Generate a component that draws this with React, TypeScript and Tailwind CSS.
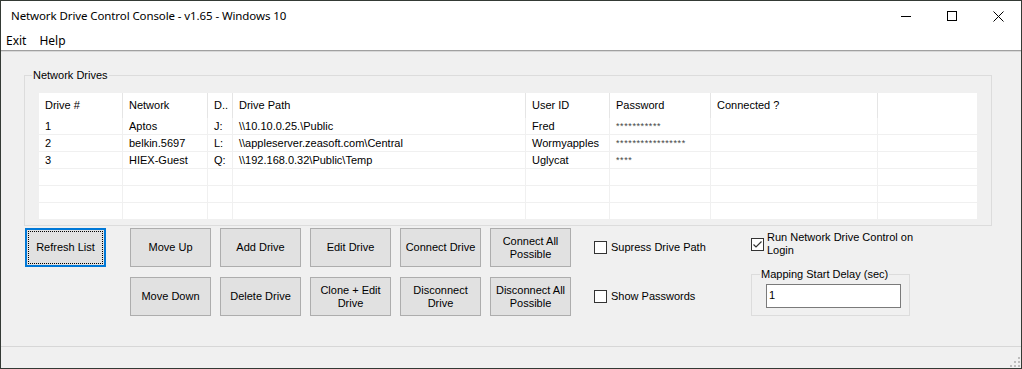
const columns = [
  { label: 'Drive #', width: 84 },
  { label: 'Network', width: 85 },
  { label: 'D..', width: 25 },
  { label: 'Drive Path', width: 293 },
  { label: 'User ID', width: 84 },
  { label: 'Password', width: 101 },
  { label: 'Connected ?', width: 167 },
  { label: '', width: 0 },
]

const drives = [
  ['1', 'Aptos', 'J:', '\\\\10.10.0.25.\\Public', 'Fred', '***********', ''],
  ['2', 'belkin.5697', 'L:', '\\\\appleserver.zeasoft.com\\Central', 'Wormyapples', '*****************', ''],
  ['3', 'HIEX-Guest', 'Q:', '\\\\192.168.0.32\\Public\\Temp', 'Uglycat', '****', ''],
  ['', '', '', '', '', '', ''],
  ['', '', '', '', '', '', ''],
  ['', '', '', '', '', '', ''],
]

const buttons = [
  ['Move Up'],
  ['Add Drive'],
  ['Edit Drive'],
  ['Connect Drive'],
  ['Connect All', 'Possible'],
  ['Move Down'],
  ['Delete Drive'],
  ['Clone + Edit', 'Drive'],
  ['Disconnect', 'Drive'],
  ['Disconnect All', 'Possible'],
]

function CheckBox({ checked = false }: { checked?: boolean }) {
  return (
    <span className="flex h-[13px] w-[13px] shrink-0 items-center justify-center border border-[#333333] bg-white">
      {checked && (
        <svg width="11" height="11" viewBox="0 0 11 11" aria-hidden="true">
          <polyline points="1.5,5.5 4,8 9.5,2.5" fill="none" stroke="#333333" strokeWidth="1.2" />
        </svg>
      )}
    </span>
  )
}

function WinButton({ lines }: { lines: string[] }) {
  return (
    <button
      type="button"
      className="flex h-[39px] w-[81px] flex-col items-center justify-center border border-[#adadad] bg-[#e1e1e1] text-[11px] leading-[13px] text-black"
    >
      {lines.map((l) => (
        <span key={l}>{l}</span>
      ))}
    </button>
  )
}

export default function App() {
  const gridCols = 'grid grid-cols-[84px_85px_25px_293px_84px_101px_167px_1fr]'

  return (
    <div
      className="flex h-[369px] w-[1022px] flex-col overflow-hidden border border-[#343a35] bg-[#f0f0f0] text-black"
      style={{ fontFamily: '"Liberation Sans", Arial, sans-serif' }}
    >
      {/* Title bar */}
      <div className="flex h-[30px] items-center bg-white">
        <span className="pl-[10px] text-[11.5px] tracking-[-0.1px]" style={{ fontFamily: '"Noto Sans", sans-serif' }}>
          Network Drive Control Console - v1.65 - Windows 10
        </span>
        <div className="ml-auto flex h-full">
          <div className="flex h-full w-[46px] items-center justify-center">
            <svg width="10" height="10" viewBox="0 0 10 10" aria-hidden="true" shapeRendering="crispEdges">
              <line x1="0" y1="5.5" x2="10" y2="5.5" stroke="#000" strokeWidth="1" />
            </svg>
          </div>
          <div className="flex h-full w-[46px] items-center justify-center">
            <svg width="10" height="10" viewBox="0 0 10 10" aria-hidden="true" shapeRendering="crispEdges">
              <rect x="0.5" y="0.5" width="9" height="9" fill="none" stroke="#000" strokeWidth="1" />
            </svg>
          </div>
          <div className="flex h-full w-[46px] items-center justify-center">
            <svg width="11" height="11" viewBox="0 0 11 11" aria-hidden="true">
              <path d="M0.5 0.5 L10.5 10.5 M10.5 0.5 L0.5 10.5" fill="none" stroke="#000" strokeWidth="1" />
            </svg>
          </div>
        </div>
      </div>

      {/* Menu */}
      <div className="flex h-[19px] items-center gap-[13px] bg-white pl-[5px] text-[12px]" style={{ fontFamily: '"Noto Sans", sans-serif' }}>
        <span>Exit</span>
        <span>Help</span>
      </div>
      <div className="h-[2px] border-t border-[#a0a0a0] bg-[#d8d8d8]" />

      {/* Client */}
      <div className="flex-1 text-[11px]">
        <fieldset className="ml-[23px] mt-[17px] w-[968px] border border-[#dcdcdc]">
          <legend className="ml-[7px] px-[1px] leading-[12px]">Network Drives</legend>
          <div className="mx-[14px] mb-[6px] mt-[12px] h-[126px] overflow-hidden bg-white">
            <div className={`${gridCols} h-[25px]`}>
              {columns.map((c, i) => (
                <div
                  key={i}
                  className={`flex items-center pl-[6px] ${i < 7 ? 'border-r border-[#e5e5e5]' : ''}`}
                >
                  {c.label}
                </div>
              ))}
            </div>
            {drives.map((row, r) => (
              <div key={r} className={`${gridCols} h-[17px] border-b border-[#f0f0f0]`}>
                {[...row, ''].map((cell, i) => (
                  <div
                    key={i}
                    className={`flex items-center whitespace-nowrap pl-[6px] ${i < 7 ? 'border-r border-[#f0f0f0]' : ''} ${i === 5 ? 'text-[9px] tracking-[0.6px] text-[#444]' : ''}`}
                  >
                    {cell}
                  </div>
                ))}
              </div>
            ))}
          </div>
        </fieldset>

        {/* Buttons and options */}
        <div className="mt-[2px] flex pl-[24px]">
          <button
            type="button"
            className="h-[39px] w-[81px] border-2 border-[#0078d7] bg-[#e1e1e1] p-[1px] text-[11px]"
          >
            <span className="flex h-full w-full items-center justify-center border border-dotted border-black">
              Refresh List
            </span>
          </button>

          <div className="ml-[24px] grid grid-cols-5 gap-x-[9px] gap-y-[10px]">
            {buttons.map((b) => (
              <WinButton key={b.join(' ')} lines={b} />
            ))}
          </div>

          <div className="ml-[23px] flex w-[157px] flex-col gap-[10px]">
            <label className="flex h-[39px] items-center gap-[4px]">
              <CheckBox />
              <span>Supress Drive Path</span>
            </label>
            <label className="flex h-[39px] items-center gap-[4px]">
              <CheckBox />
              <span>Show Passwords</span>
            </label>
          </div>

          <div className="flex flex-col">
            <label className="mt-[3px] flex items-center gap-[3px] leading-[13px]">
              <CheckBox checked />
              <span>
                Run Network Drive Control on
                <br />
                Login
              </span>
            </label>
            <fieldset className="mt-[11px] w-[159px] border border-[#dcdcdc]">
              <legend className="ml-[8px] px-[1px] leading-[12px]">Mapping Start Delay (sec)</legend>
              <div className="mb-[7px] ml-[14px] mt-[4px] h-[24px] w-[135px] border border-[#7a7a7a] bg-white pl-[2px] pt-[4px] leading-[13px]">
                1
              </div>
            </fieldset>
          </div>
        </div>
      </div>

      {/* Status bar */}
      <div className="flex h-[22px] items-end justify-end border-t border-[#d7d7d7] pb-[1px] pr-[1px]">
        <svg width="10" height="10" viewBox="0 0 10 10" aria-hidden="true">
          <rect x="8" y="0" width="2" height="2" fill="#bdbdbd" />
          <rect x="4" y="4" width="2" height="2" fill="#bdbdbd" />
          <rect x="8" y="4" width="2" height="2" fill="#bdbdbd" />
          <rect x="0" y="8" width="2" height="2" fill="#bdbdbd" />
          <rect x="4" y="8" width="2" height="2" fill="#bdbdbd" />
          <rect x="8" y="8" width="2" height="2" fill="#bdbdbd" />
        </svg>
      </div>
    </div>
  )
}
